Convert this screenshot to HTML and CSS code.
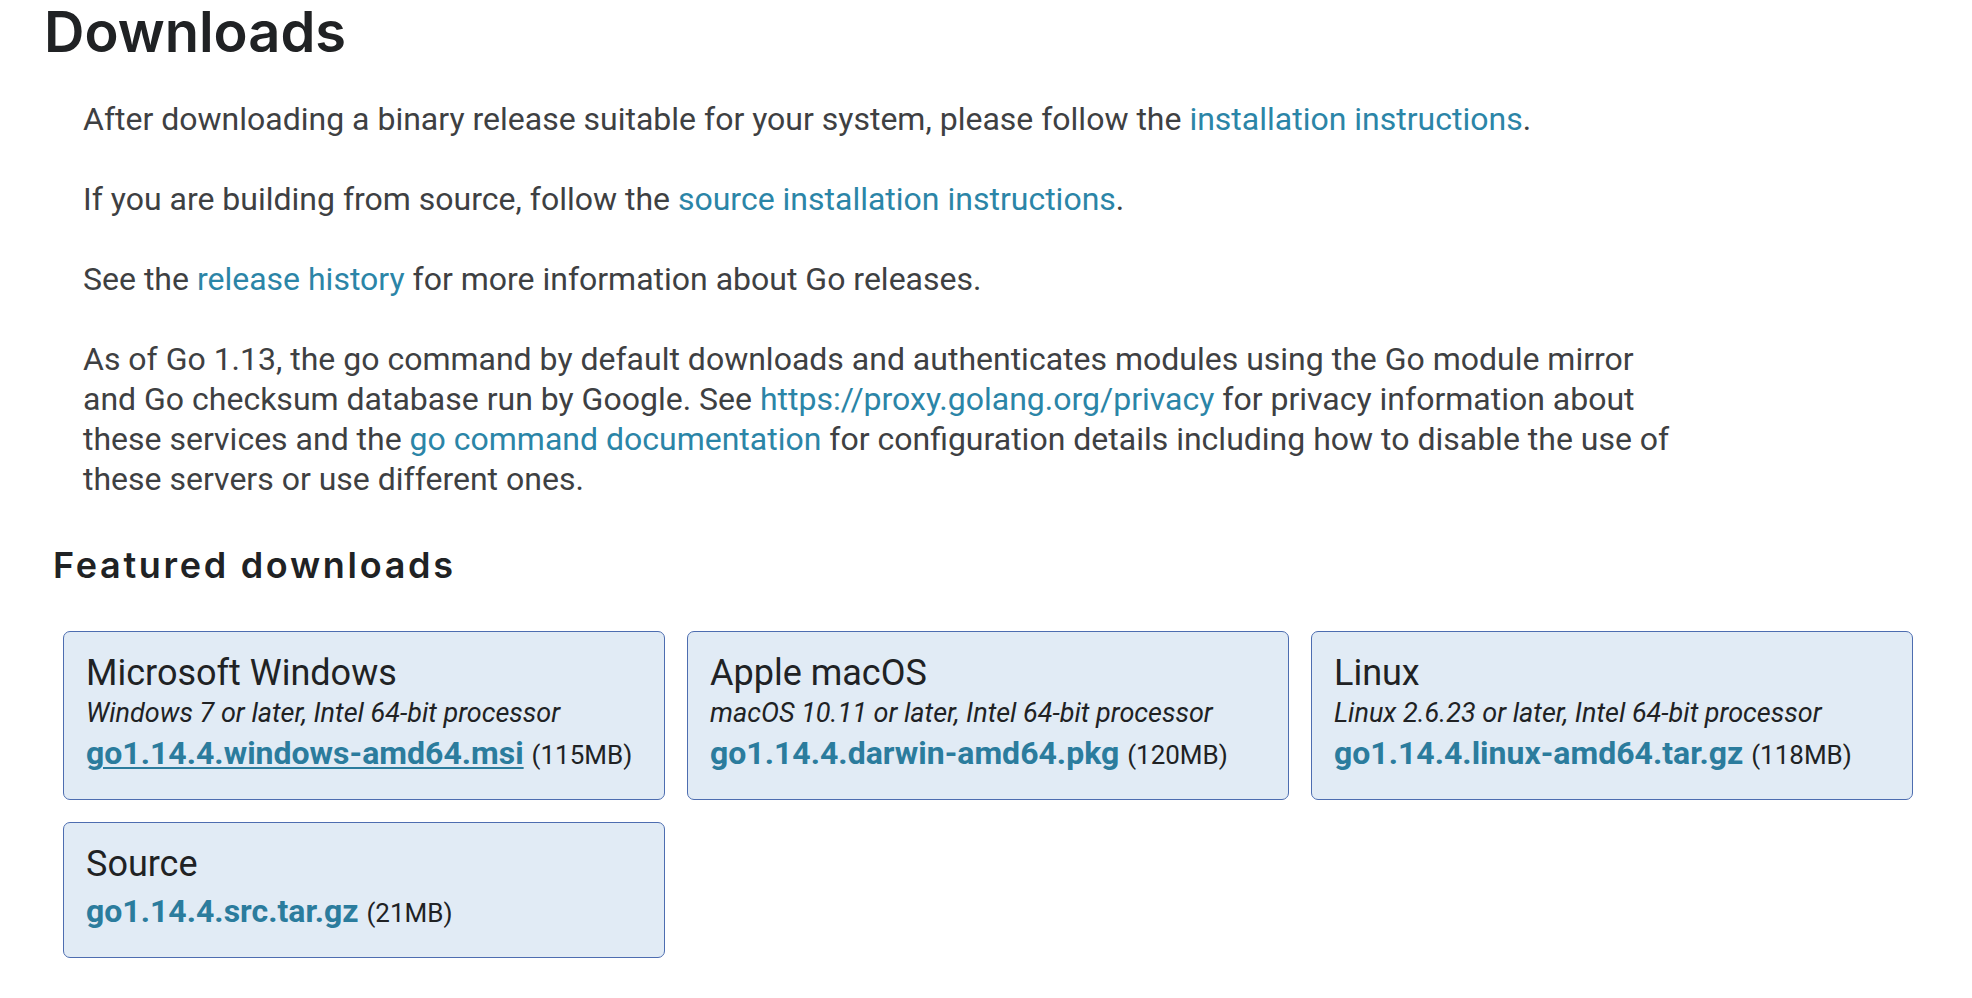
FILE: index.html
```html
<!DOCTYPE html>
<html lang="en">
<head>
<meta charset="utf-8">
<title>Downloads - The Go Programming Language</title>
<link rel="stylesheet" href="styles.css">
</head>
<body>
<main class="page">
  <h1 class="title">Downloads</h1>
  <div class="intro">
    <p>After downloading a binary release suitable for your system, please follow the <a href="#">installation instructions</a>.</p>
    <p>If you are building from source, follow the <a href="#">source installation instructions</a>.</p>
    <p>See the <a href="#">release history</a> for more information about Go releases.</p>
    <p>As of Go 1.13, the go command by default downloads and authenticates modules using the Go module mirror<br>and Go checksum database run by Google. See <a href="#">https://proxy.golang.org/privacy</a> for privacy information about<br>these services and the <a href="#">go command documentation</a> for configuration details including how to disable the use of<br>these servers or use different ones.</p>
  </div>
  <h2 class="featured-title">Featured downloads</h2>
  <div class="downloads">
    <a class="card" href="#">
      <div class="card-os">Microsoft Windows</div>
      <div class="card-platform">Windows 7 or later, Intel 64-bit processor</div>
      <div class="card-file"><span class="filename filename-active">go1.14.4.windows-amd64.msi</span> <span class="size">(115MB)</span></div>
    </a>
    <a class="card" href="#">
      <div class="card-os">Apple macOS</div>
      <div class="card-platform">macOS 10.11 or later, Intel 64-bit processor</div>
      <div class="card-file"><span class="filename">go1.14.4.darwin-amd64.pkg</span> <span class="size">(120MB)</span></div>
    </a>
    <a class="card" href="#">
      <div class="card-os">Linux</div>
      <div class="card-platform">Linux 2.6.23 or later, Intel 64-bit processor</div>
      <div class="card-file"><span class="filename">go1.14.4.linux-amd64.tar.gz</span> <span class="size">(118MB)</span></div>
    </a>
    <a class="card card-source" href="#">
      <div class="card-os">Source</div>
      <div class="card-file"><span class="filename">go1.14.4.src.tar.gz</span> <span class="size">(21MB)</span></div>
    </a>
  </div>
</main>
</body>
</html>
```

FILE: styles.css
```css
html, body {
  margin: 0;
  padding: 0;
  background: #ffffff;
}

body {
  font-family: Roboto, "Liberation Sans", Arial, sans-serif;
  color: #3e4042;
}

.page {
  padding: 0 0 40px 44px;
}

.title {
  margin: 0;
  padding-top: 4px;
  font-family: Inter, "Open Sans", sans-serif;
  font-weight: 600;
  font-size: 56px;
  line-height: 56px;
  color: #202224;
}

.intro {
  padding-left: 39px;
  padding-top: 39px;
}

.intro p {
  margin: 0 0 40px 0;
  font-size: 32px;
  line-height: 40px;
}

.intro p:last-child {
  margin-bottom: 0;
}

.intro a {
  color: #2b85a7;
  text-decoration: none;
}

.featured-title {
  margin: 0;
  padding: 46px 0 0 9px;
  font-family: Inter, "Open Sans", sans-serif;
  font-weight: 600;
  font-size: 36px;
  line-height: 40px;
  letter-spacing: 2.7px;
  color: #202224;
}

.downloads {
  display: grid;
  grid-template-columns: repeat(3, 602px);
  gap: 22px 22px;
  margin: 46px 0 0 19px;
}

.card {
  display: block;
  box-sizing: border-box;
  padding: 21px 22px 24px 22px;
  background: #e1ebf5;
  border: 1.5px solid #4d6db0;
  border-radius: 7px;
  color: #202224;
  text-decoration: none;
}

.card-os {
  font-size: 36px;
  line-height: 40px;
  color: #202224;
}

.card-platform {
  padding-top: 2px;
  font-size: 27px;
  line-height: 36px;
  font-style: italic;
  color: #202224;
}

.card-file {
  margin-top: 2px;
  font-size: 32px;
  line-height: 40px;
}

.card-source .card-file {
  margin-top: 7px;
}

.filename {
  font-weight: 700;
  color: #2b7c9d;
}

.filename-active {
  text-decoration: underline;
  text-decoration-thickness: 2px;
  text-underline-offset: 3px;
}

.size {
  font-size: 26px;
  color: #202224;
}
```
